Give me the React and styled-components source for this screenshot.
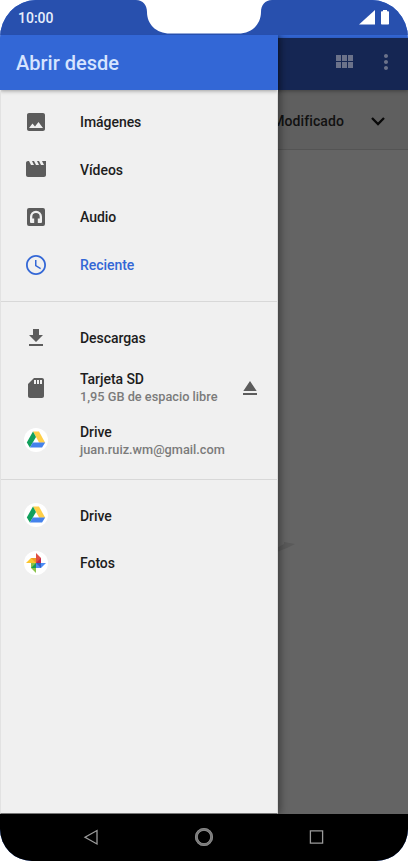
import React from "react"
import styled, { createGlobalStyle } from "styled-components"

const GlobalStyle = createGlobalStyle`
  body {
    margin: 0;
    background: #fff;
    font-family: Roboto, "Liberation Sans", sans-serif;
  }
`

const Phone = styled.div`
  display: flex;
  flex-direction: column;
  width: 408px;
  height: 861px;
  overflow: hidden;
  background: #3367d6;
  border-radius: 36px 36px 32px 32px / 38px 38px 32px 32px;
`

const StatusBar = styled.header`
  position: relative;
  box-sizing: border-box;
  display: flex;
  align-items: center;
  justify-content: space-between;
  flex: none;
  height: 35px;
  padding: 0 18px;
  background: #2850ae;
`

const Time = styled.span`
  font-size: 14px;
  font-weight: 500;
  line-height: 16px;
  letter-spacing: 0;
  color: #e6eefc;
`

const Notch = styled.svg`
  position: absolute;
  top: 0;
  left: 136px;
`

const Signals = styled.svg`
  margin-top: -1px;
`

const Screen = styled.main`
  display: grid;
  grid-template-columns: 408px;
  grid-template-rows: 779px;
  flex: none;
`

const Behind = styled.section`
  grid-area: 1/1;
  display: flex;
  flex-direction: column;
  margin-top: 3px;
  background: #646464;
`

const Toolbar = styled.div`
  position: relative;
  z-index: 1;
  box-sizing: border-box;
  display: flex;
  justify-content: flex-end;
  align-items: center;
  gap: 18px;
  flex: none;
  height: 52px;
  padding: 0 10px 4px 0;
  color: #6b728a;
  background: #152653;
  box-shadow: 0 1px 4px rgba(0, 0, 0, .35);
`

const SortBar = styled.div`
  box-sizing: border-box;
  display: flex;
  justify-content: flex-end;
  align-items: center;
  gap: 22px;
  flex: none;
  height: 60px;
  padding: 2px 18px 0 0;
  border-bottom: 1px solid #545454;
  font-size: 14px;
  font-weight: 500;
  letter-spacing: 0.1px;
  color: #111;
  background: #5f5f5f;
`

const Leaf = styled.svg`
  margin: 392px 0 0 277px;
`

const Drawer = styled.aside`
  grid-area: 1/1;
  z-index: 2;
  display: flex;
  flex-direction: column;
  width: 278px;
  background: #f0f0f0;
  box-shadow: 2px 0 8px rgba(0, 0, 0, .42);
  clip-path: inset(0 -14px 0 0);
`

const Title = styled.h1`
  box-sizing: border-box;
  flex: none;
  height: 55px;
  margin: 0;
  padding: 1px 16px 0;
  font-size: 20px;
  font-weight: 500;
  line-height: 55px;
  letter-spacing: 0;
  color: #d6e4ff;
  background: #3367d6;
  box-shadow: 0 1px 4px rgba(0, 0, 0, .35);
`

const List = styled.nav`
  flex: 1;
  box-sizing: border-box;
  border-left: 1px solid #e2e2e2;
  border-right: 1px solid #dcdcdc;
  border-bottom: 1px solid #777;
`

const Group = styled.ul`
  list-style: none;
  margin: 0;
  padding: ${props => props.$first ? "8px" : "12px"} 0 ${props => props.$first ? "12.4px" : "12px"};
  border-bottom: ${props => props.$last ? "0" : "1px solid #d8d8d8"};
`

const Row = styled.li`
  box-sizing: border-box;
  display: grid;
  grid-template-columns: 24px 1fr 24px;
  column-gap: 32px;
  align-items: center;
  height: ${props => props.$tall ? "52.6px" : "47.6px"};
  padding: 0 15px 0 23px;
  color: ${props => props.$active ? "#3367d6" : "#5c5c5c"};
`

const Label = styled.div`
  margin-right: -32px;
  padding-top: 1px;
  white-space: nowrap;
  font-size: 14px;
  font-weight: 500;
  line-height: 18px;
  letter-spacing: -0.05px;
  color: ${props => props.$active ? "#3367d6" : "#1d1d1d"};
`

const Detail = styled.div`
  font-size: 12.75px;
  font-weight: 500;
  letter-spacing: 0;
  color: #7b7b7b;
`

const NavBar = styled.footer`
  display: flex;
  justify-content: center;
  align-items: center;
  gap: 89px;
  flex: 1;
  padding-bottom: 1px;
  background: #000;
`

const Icon = ({ d, size = 24 }) =>
  <svg width={size} height={size} viewBox="0 0 24 24" fill="currentColor" fillRule="evenodd">
    <path d={d} />
  </svg>

const paths = {
  image: "M21 19V5c0-1.100-.9-2-2-2H5c-1.100 0-2 .9-2 2v14c0 1.100.9 2 2 2h14c1.100 0 2-.9 2-2zM8.500 13.500l2.500 3.010L14.500 12l4.500 6H5l3.500-4.500z",
  movie: "M18 4l2 4h-3l-2-4h-2l2 4h-3l-2-4H8l2 4H7L5 4H4c-1.100 0-1.990.9-1.990 2L2 18c0 1.100.9 2 2 2h16c1.100 0 2-.9 2-2V4h-4z",
  audio: "M5 3h14a2 2 0 0 1 2 2v14a2 2 0 0 1-2 2H5a2 2 0 0 1-2-2V5a2 2 0 0 1 2-2zM12 5.800a6 6 0 0 0-6 6V17a1 1 0 0 0 1 1h3.200v-4.500H8.300v-1.700a3.700 3.700 0 0 1 7.400 0v1.700H13.800V18H17a1 1 0 0 0 1-1v-5.200a6 6 0 0 0-6-6z",
  clock: "M11.990 2C6.470 2 2 6.480 2 12s4.470 10 9.990 10C17.520 22 22 17.520 22 12S17.520 2 11.990 2zM12 20.200c-4.500 0-8.200-3.700-8.200-8.200S7.500 3.800 12 3.800s8.200 3.700 8.200 8.200-3.700 8.200-8.200 8.200zM12.500 7H11v6l5.250 3.150.75-1.230-4.500-2.670z",
  download: "M19 9h-4V3H9v6H5l7 7 7-7zM5 18v2h14v-2H5z",
  sd: "M18 2h-8L4.020 8 4 20c0 1.100.9 2 2 2h12c1.100 0 2-.9 2-2V4c0-1.100-.9-2-2-2zM12 8h-2V4h2v4zm3 0h-2V4h2v4zm3 0h-2V4h2v4z",
  eject: "M5 17h14v2H5zM12 5L5.330 15h13.340z",
  grid: "M4 11h5V5H4v6zm0 7h5v-6H4v6zm6 0h5v-6h-5v6zm6 0h5v-6h-5v6zm-6-7h5V5h-5v6zm6-6v6h5V5h-5z",
  more: "M12 8c1.100 0 2-.9 2-2s-.9-2-2-2-2 .9-2 2 .9 2 2 2zm0 2c-1.100 0-2 .9-2 2s.9 2 2 2 2-.9 2-2-.9-2-2-2zm0 6c-1.100 0-2 .9-2 2s.9 2 2 2 2-.9 2-2-.9-2-2-2z",
}

const DriveIcon = () =>
  <svg width="24" height="24" viewBox="0 0 24 24">
    <circle cx="12" cy="12" r="12" fill="#fff" />
    <path d="M9 3.500h6l6.200 11.300h-6z" fill="#ffcf48" />
    <path d="M9 3.500l3 5.500L5.900 19.600 2.800 14.500z" fill="#11a05c" />
    <path d="M8.700 14.500h12.500l-3.100 5.100H5.900z" fill="#4582ec" />
  </svg>

const PhotosIcon = () =>
  <svg width="24" height="24" viewBox="0 0 24 24">
    <circle cx="12" cy="12" r="12" fill="#fff" />
    <path d="M12 2l5 5v5h-5z" fill="#e04f43" />
    <path d="M12 12l5-5v5z" fill="#bd2755" />
    <path d="M22 12l-5 5h-5v-5z" fill="#4d8bf4" />
    <path d="M12 12h5v5z" fill="#345fc0" />
    <path d="M12 22l-5-5v-5h5z" fill="#8bc34a" />
    <path d="M12 12v5H7z" fill="#169b58" />
    <path d="M2 12l5-5h5v5z" fill="#fcc52d" />
    <path d="M7 7h5v5z" fill="#f29b26" />
  </svg>

const groups = [
  [
    { label: "Imágenes", icon: <Icon d={paths.image} /> },
    { label: "Vídeos", icon: <Icon d={paths.movie} /> },
    { label: "Audio", icon: <Icon d={paths.audio} /> },
    { label: "Reciente", icon: <Icon d={paths.clock} />, active: true },
  ],
  [
    { label: "Descargas", icon: <Icon d={paths.download} /> },
    { label: "Tarjeta SD", detail: "1,95 GB de espacio libre", icon: <Icon d={paths.sd} />, eject: true },
    { label: "Drive", detail: "juan.ruiz.wm@gmail.com", icon: <DriveIcon /> },
  ],
  [
    { label: "Drive", icon: <DriveIcon /> },
    { label: "Fotos", icon: <PhotosIcon /> },
  ],
]

const App = () =>
  <>
    <GlobalStyle />
    <Phone>
      <StatusBar>
        <Time>10:00</Time>
        <Notch width="136" height="34" viewBox="0 0 136 34">
          <path d="M0 0C7 0 11 5 11 12C11 24 20 33.500 34 33.500H102C116 33.500 125 24 125 12C125 5 129 0 136 0Z" fill="#fff" />
        </Notch>
        <Signals width="31" height="16" viewBox="0 0 31 16" fill="#fff">
          <path d="M16 1v14.500H0z" />
          <path d="M24 1h4v1.300h1.200q.8 0 .8.800v11.600q0 .8-.8.800h-6.400q-.8 0-.8-.8V3.100q0-.8.800-.8H24z" />
        </Signals>
      </StatusBar>
      <Screen>
        <Behind>
          <Toolbar>
            <Icon d={paths.grid} />
            <Icon d={paths.more} />
          </Toolbar>
          <SortBar>
            <span>Modificado</span>
            <svg width="24" height="24" viewBox="0 0 24 24" fill="none" stroke="#080808" strokeWidth="2.300">
              <path d="M6 9l6 6 6-6" />
            </svg>
          </SortBar>
          <Leaf width="19" height="10" viewBox="0 0 19 10">
            <path d="M0 6L7 2V0l11 2-8 4-10 4z" fill="#5a5a5a" />
          </Leaf>
        </Behind>
        <Drawer>
          <Title>Abrir desde</Title>
          <List>
            {
              groups.map((rows, index) =>
                <Group key={index} $first={index === 0} $last={index === groups.length - 1}>
                  {
                    rows.map(row =>
                      <Row key={row.label} $tall={!!row.detail} $active={row.active}>
                        {row.icon}
                        <Label $active={row.active}>
                          {row.label}
                          {row.detail && <Detail>{row.detail}</Detail>}
                        </Label>
                        {row.eject && <Icon d={paths.eject} />}
                      </Row>
                    )
                  }
                </Group>
              )
            }
          </List>
        </Drawer>
      </Screen>
      <NavBar>
        <svg width="24" height="24" viewBox="0 0 24 24" fill="none" stroke="#9a9a9a" strokeWidth="1.300">
          <path d="M18 5.500v13.500L6 12.200z" />
        </svg>
        <svg width="24" height="24" viewBox="0 0 24 24" fill="none" stroke="#8c8c8c">
          <circle cx="12" cy="12" r="7.700" stroke="#777" strokeWidth="2.800" />
          <circle cx="12" cy="12" r="8.600" strokeWidth=".8" />
          <circle cx="12" cy="12" r="6.700" strokeWidth=".8" />
        </svg>
        <svg width="24" height="24" viewBox="0 0 24 24" fill="none" stroke="#9a9a9a" strokeWidth="1.300">
          <path d="M5.400 5.800h12.200v12.400H5.400z" />
        </svg>
      </NavBar>
    </Phone>
  </>

export default App
